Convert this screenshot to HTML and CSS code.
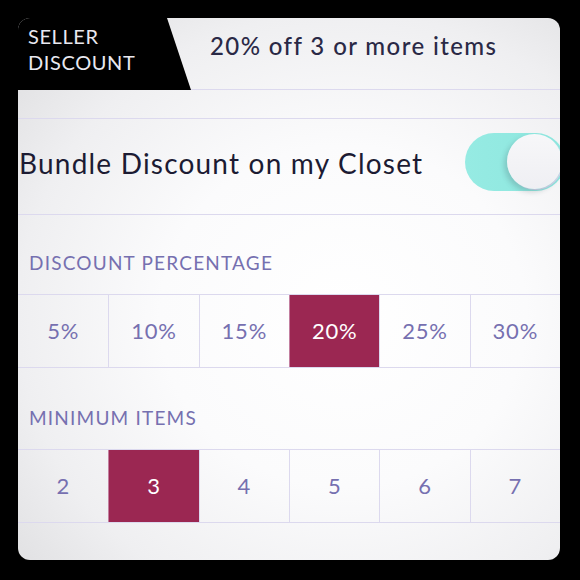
FILE: index.html
```html
<!DOCTYPE html>
<html>
<head>
<meta charset="utf-8">
<link rel="stylesheet" href="styles.css">
</head>
<body>
<div class="frame">
  <div class="card">
    <div class="header">
      <div class="tab">SELLER<br>DISCOUNT</div>
      <div class="title">20% off 3 or more items</div>
    </div>
    <div class="spacer"></div>
    <div class="toggle-row">
      <div class="toggle-label">Bundle Discount on my Closet</div>
      <div class="toggle"><div class="knob"></div></div>
    </div>
    <div class="section-label first">DISCOUNT PERCENTAGE</div>
    <div class="options">
      <div class="opt">5%</div>
      <div class="opt">10%</div>
      <div class="opt">15%</div>
      <div class="opt selected">20%</div>
      <div class="opt">25%</div>
      <div class="opt">30%</div>
    </div>
    <div class="section-label second">MINIMUM ITEMS</div>
    <div class="options">
      <div class="opt">2</div>
      <div class="opt selected">3</div>
      <div class="opt">4</div>
      <div class="opt">5</div>
      <div class="opt">6</div>
      <div class="opt">7</div>
    </div>
  </div>
</div>
</body>
</html>
```

FILE: styles.css
```css
html, body {
  margin: 0;
  padding: 0;
  background: #000;
}
.frame {
  width: 580px;
  height: 580px;
  box-sizing: border-box;
  padding: 18px;
  background: #000;
}
.card {
  width: 542px;
  height: 542px;
  border-radius: 12px;
  overflow: hidden;
  display: flex;
  flex-direction: column;
  font-family: Lato, "Open Sans", sans-serif;
  background: radial-gradient(ellipse 75% 70% at 60% 55%, #ffffff 0%, #fbfbfc 45%, #efeff1 80%, #e3e3e5 100%);
}
.header {
  height: 72px;
  box-sizing: border-box;
  border-bottom: 1px solid #dcd9ee;
  display: flex;
  flex-shrink: 0;
}
.tab {
  width: 173px;
  flex-shrink: 0;
  background: #000;
  clip-path: polygon(0 0, 149px 0, 173px 100%, 0 100%);
  color: #e9e9f0;
  font-size: 20px;
  line-height: 26px;
  letter-spacing: 0.6px;
  padding: 5px 0 0 10px;
  box-sizing: border-box;
  margin-bottom: -1px;
}
.title {
  padding: 14px 0 0 19px;
  font-size: 24px;
  line-height: 1.2;
  font-weight: 500;
  letter-spacing: 1.4px;
  color: #2a2946;
}
.spacer {
  height: 29px;
  box-sizing: border-box;
  border-bottom: 1px solid #dcd9ee;
  flex-shrink: 0;
}
.toggle-row {
  height: 96px;
  box-sizing: border-box;
  border-bottom: 1px solid #dcd9ee;
  display: flex;
  align-items: center;
  justify-content: space-between;
  padding-left: 1px;
  flex-shrink: 0;
}
.toggle-label {
  font-size: 28px;
  line-height: 1.2;
  letter-spacing: 1.2px;
  color: #1c1b33;
  margin-top: -6px;
}
.toggle {
  position: relative;
  width: 100px;
  height: 58px;
  border-radius: 29px;
  background: linear-gradient(90deg, #96ebe3, #8de6de);
  margin-right: -5px;
  margin-top: -9px;
}
.knob {
  position: absolute;
  left: 42px;
  top: 1px;
  width: 55px;
  height: 55px;
  border-radius: 50%;
  background: linear-gradient(180deg, #f7f7f9, #efeff3);
  box-shadow: -3px 3px 5px rgba(60, 80, 90, 0.22), 1px 1px 0 #d8d6ee;
}
.section-label {
  box-sizing: border-box;
  font-size: 19px;
  line-height: 24px;
  letter-spacing: 1.2px;
  color: #7670b0;
  padding-left: 11px;
  flex-shrink: 0;
}
.section-label.first {
  height: 79px;
  padding-top: 36px;
}
.section-label.second {
  height: 81px;
  padding-top: 38px;
}
.options {
  display: grid;
  grid-template-columns: repeat(6, 1fr);
  height: 74px;
  box-sizing: border-box;
  border-top: 1px solid #dcd9ee;
  border-bottom: 1px solid #dcd9ee;
  flex-shrink: 0;
}
.opt {
  display: flex;
  align-items: center;
  justify-content: center;
  font-size: 22px;
  letter-spacing: 0.8px;
  color: #7670b0;
  border-left: 1px solid #dcd9ee;
  padding-bottom: 2px;
}
.opt:first-child {
  border-left: none;
}
.opt.selected {
  background: #9b2752;
  color: #ffffff;
  border-left-color: #c37fa0;
}
```
